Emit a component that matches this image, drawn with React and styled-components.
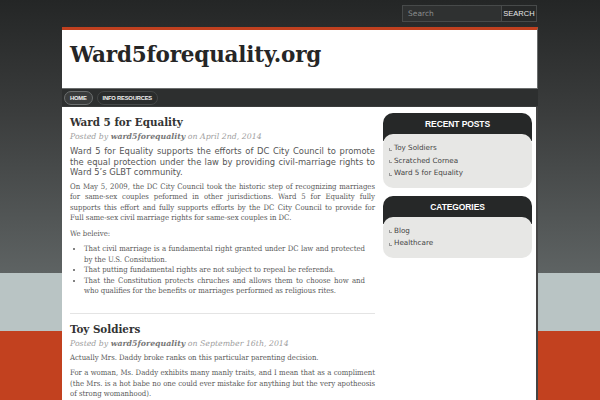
import React from 'react';
import styled, { createGlobalStyle } from 'styled-components';

const GlobalStyle = createGlobalStyle`
  html, body {
    margin: 0;
    padding: 0;
  }
  body {
    width: 600px;
    height: 400px;
    overflow: hidden;
    background:
      linear-gradient(
        to bottom,
        #242626 0px,
        #3a3c3c 110px,
        #5e6363 273px,
        #b9c4c4 273px,
        #b9c4c4 331px,
        #c2411f 331px,
        #c2411f 100%
      );
    font-family: 'DejaVu Sans', sans-serif;
  }
`;

const Page = styled.div`
  width: 476px;
  margin: 0 auto;
  padding-top: 5px;
`;

const TopBar = styled.div`
  display: flex;
  justify-content: flex-end;
  height: 17px;
  margin-bottom: 5px;
  padding-right: 1px;
`;

const SearchInput = styled.div`
  box-sizing: border-box;
  width: 99px;
  height: 17px;
  border: 1px solid #474a4a;
  border-right: none;
  background: #2f3131;
  color: #8a8d8d;
  font-size: 7.5px;
  line-height: 15px;
  padding-left: 5px;
  font-family: 'DejaVu Sans', sans-serif;
`;

const SearchButton = styled.div`
  box-sizing: border-box;
  width: 36px;
  height: 17px;
  border: 1px solid #474a4a;
  background: #262828;
  color: #e6e6e6;
  font-size: 7.5px;
  line-height: 15px;
  text-align: center;
  font-family: 'Liberation Sans', sans-serif;
`;

const Header = styled.header`
  box-sizing: border-box;
  height: 62px;
  padding: 11px 0 0 8px;
  border-top: 3px solid #c0401f;
  border-right: 1px solid #6a6d6d;
  border-bottom: 1px solid #6a6d6d;
  background: #fff;
`;

const SiteTitle = styled.h1`
  margin: 0;
  font-family: 'DejaVu Serif', serif;
  font-weight: bold;
  font-size: 21.5px;
  line-height: 28px;
  color: #262626;
  letter-spacing: -0.2px;
`;

const Nav = styled.nav`
  display: flex;
  gap: 4px;
  height: 17px;
  align-items: center;
  padding-left: 2px;
  background: #2d2f2f;
`;

const NavItem = styled.div`
  height: 12px;
  border-radius: 7px;
  border: 1px solid ${(p) => (p.$active ? '#6c6f6f' : '#444747')};
  background: ${(p) => (p.$active ? '#3a3c3c' : '#2a2c2c')};
  color: #f2f2f2;
  font-family: 'Liberation Sans', sans-serif;
  font-weight: bold;
  font-size: 5.8px;
  line-height: 12px;
  padding: 0 5px;
  letter-spacing: -0.2px;
`;

const Content = styled.div`
  display: flex;
  background: #fff;
  border-right: 2px solid #444;
  margin-top: 1px;
  padding: 6px 6px 0 8px;
  height: 300px;
  gap: 8px;
`;

const Main = styled.main`
  width: 305px;
  flex: none;
`;

const Post = styled.article`
  padding-bottom: ${(p) => (p.$last ? '0' : '11px')};
  border-bottom: ${(p) => (p.$last ? 'none' : '1px solid #e4e4e4')};
  margin-bottom: 6px;
`;

const PostTitle = styled.h2`
  margin: 0;
  font-family: 'DejaVu Serif Condensed', 'DejaVu Serif', serif;
  font-weight: bold;
  font-size: 11.5px;
  line-height: 18px;
  color: #333;
`;

const Meta = styled.div`
  font-family: 'DejaVu Serif', serif;
  font-style: italic;
  font-size: 7.8px;
  line-height: 12px;
  color: #a0a0a0;
  margin-bottom: 3px;

  b {
    color: #777;
  }
`;

const Lead = styled.p`
  margin: 0 0 4px;
  font-family: 'DejaVu Sans', sans-serif;
  font-size: 8.4px;
  line-height: 10.6px;
  color: #555;
  text-align: justify;
`;

const Para = styled.p`
  margin: 0 0 5px;
  font-family: 'DejaVu Serif Condensed', 'DejaVu Serif', serif;
  font-size: 7.7px;
  line-height: 10.5px;
  color: #5a5a5a;
  text-align: justify;
`;

const List = styled.ul`
  margin: 0 0 5px;
  padding-left: 14px;
  font-family: 'DejaVu Serif Condensed', 'DejaVu Serif', serif;
  font-size: 7.7px;
  line-height: 10.5px;
  color: #5a5a5a;
  text-align: justify;
  width: 281px;

  li {
    margin: 0;
  }
`;

const Sidebar = styled.aside`
  width: 149px;
  flex: none;
`;

const Widget = styled.section`
  margin-bottom: 8px;
`;

const WidgetHead = styled.div`
  background: #262828;
  color: #fff;
  border-radius: 10px 10px 0 0;
  font-family: 'Liberation Sans', sans-serif;
  font-weight: bold;
  font-size: 8.5px;
  height: 28px;
  line-height: 22px;
  text-align: center;
  letter-spacing: -0.1px;
`;

const WidgetBody = styled.ul`
  list-style: none;
  margin: -7px 0 0;
  padding: 8px 5px 8px 6px;
  background: #e7e7e5;
  border-radius: 10px;
  position: relative;
`;

const WidgetItem = styled.li`
  font-family: 'DejaVu Sans', sans-serif;
  font-size: 7.2px;
  line-height: 12.5px;
  color: #444;
  display: flex;
  align-items: center;
  gap: 2px;

  &::before {
    content: '';
    width: 2px;
    height: 2px;
    border-left: 1px solid #999;
    border-bottom: 1px solid #999;
    margin-top: 2px;
  }
`;

const posts = ['Toy Soldiers', 'Scratched Cornea', 'Ward 5 for Equality'];
const categories = ['Blog', 'Healthcare'];

export default function App() {
  return (
    <>
      <GlobalStyle />
      <Page>
        <TopBar>
          <SearchInput>Search</SearchInput>
          <SearchButton>SEARCH</SearchButton>
        </TopBar>
        <Header>
          <SiteTitle>Ward5forequality.org</SiteTitle>
        </Header>
        <Nav>
          <NavItem $active>HOME</NavItem>
          <NavItem>INFO RESOURCES</NavItem>
        </Nav>
        <Content>
          <Main>
            <Post>
              <PostTitle>Ward 5 for Equality</PostTitle>
              <Meta>
                Posted by <b>ward5forequality</b> on April 2nd, 2014
              </Meta>
              <Lead>
                Ward 5 for Equality supports the efforts of DC City Council to
                promote the equal protection under the law by providing
                civil-marriage rights to Ward 5’s GLBT community.
              </Lead>
              <Para>
                On May 5, 2009, the DC City Council took the historic step of
                recognizing marriages for same-sex couples peformed in other
                jurisdictions. Ward 5 for Equality fully supports this effort
                and fully supports efforts by the DC City Council to provide for
                Full same-sex civil marriage rights for same-sex couples in DC.
              </Para>
              <Para>We beleive:</Para>
              <List>
                <li>
                  That civil marriage is a fundamental right granted under DC
                  law and protected by the U.S. Consitution.
                </li>
                <li>
                  That putting fundamental rights are not subject to repeal be
                  referenda.
                </li>
                <li>
                  That the Constitution protects chruches and allows them to
                  choose how and who qualifies for the benefits or marriages
                  performed as religious rites.
                </li>
              </List>
            </Post>
            <Post $last>
              <PostTitle>Toy Soldiers</PostTitle>
              <Meta>
                Posted by <b>ward5forequality</b> on September 16th, 2014
              </Meta>
              <Para>
                Actually Mrs. Daddy broke ranks on this particular parenting
                decision.
              </Para>
              <Para>
                For a woman, Ms. Daddy exhibits many manly traits, and I mean
                that as a compliment (the Mrs. is a hot babe no one could ever
                mistake for anything but the very apotheosis of strong
                womanhood).
              </Para>
            </Post>
          </Main>
          <Sidebar>
            <Widget>
              <WidgetHead>RECENT POSTS</WidgetHead>
              <WidgetBody>
                {posts.map((p) => (
                  <WidgetItem key={p}>{p}</WidgetItem>
                ))}
              </WidgetBody>
            </Widget>
            <Widget>
              <WidgetHead>CATEGORIES</WidgetHead>
              <WidgetBody>
                {categories.map((c) => (
                  <WidgetItem key={c}>{c}</WidgetItem>
                ))}
              </WidgetBody>
            </Widget>
          </Sidebar>
        </Content>
      </Page>
    </>
  );
}
